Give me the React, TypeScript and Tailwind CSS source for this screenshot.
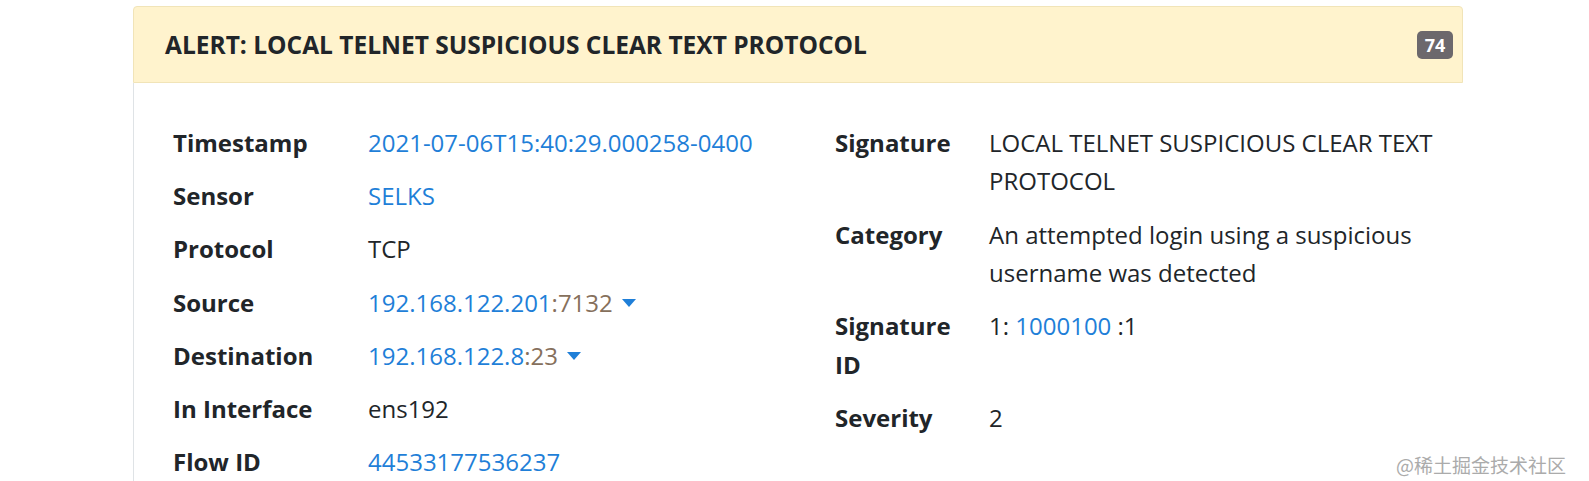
import { Fragment } from 'react';

type Row = { label: string[]; value: React.ReactNode };

const link = 'text-[#1f7fd8]';
const port = 'text-[#86705c]';

function Caret() {
  return (
    <svg className="ml-[9px] inline-block" width="14" height="8" viewBox="0 0 14 8">
      <path d="M0 0 L14 0 L7 8 Z" fill="#1f7fd8" />
    </svg>
  );
}

const left: Row[] = [
  { label: ['Timestamp'], value: <span className={link}>2021-07-06T15:40:29.000258-0400</span> },
  { label: ['Sensor'], value: <span className={link}>SELKS</span> },
  { label: ['Protocol'], value: 'TCP' },
  {
    label: ['Source'],
    value: (
      <span className="inline-flex items-center">
        <span className={link}>192.168.122.201</span>
        <span className={port}>:7132</span>
        <Caret />
      </span>
    ),
  },
  {
    label: ['Destination'],
    value: (
      <span className="inline-flex items-center">
        <span className={link}>192.168.122.8</span>
        <span className={port}>:23</span>
        <Caret />
      </span>
    ),
  },
  { label: ['In Interface'], value: 'ens192' },
  { label: ['Flow ID'], value: <span className={link}>44533177536237</span> },
];

const right: Row[] = [
  {
    label: ['Signature'],
    value: (
      <>
        <span className="block">LOCAL TELNET SUSPICIOUS CLEAR TEXT</span>
        <span className="block">PROTOCOL</span>
      </>
    ),
  },
  {
    label: ['Category'],
    value: (
      <>
        <span className="block">An attempted login using a suspicious</span>
        <span className="block">username was detected</span>
      </>
    ),
  },
  {
    label: ['Signature', 'ID'],
    value: (
      <>
        1: <span className={link}>1000100</span> :1
      </>
    ),
  },
  { label: ['Severity'], value: '2' },
];

function Column({ rows, labelWidth }: { rows: Row[]; labelWidth: string }) {
  return (
    <div className="flex flex-col gap-[14.8px]">
      {rows.map((row) => (
        <div key={row.label.join(' ')} className="flex">
          <div className={`${labelWidth} shrink-0 font-bold`}>
            {row.label.map((l, i) => (
              <Fragment key={l}>
                {i > 0 && <br />}
                {l}
              </Fragment>
            ))}
          </div>
          <div className="whitespace-nowrap">{row.value}</div>
        </div>
      ))}
    </div>
  );
}

export default function App() {
  return (
    <div
      className="h-[481px] w-[1589px] overflow-hidden bg-white text-[#212529]"
      style={{ fontFamily: '"Open Sans", "Noto Sans CJK SC", sans-serif' }}
    >
      <div className="ml-[133px] mt-[6px] w-[1330px]">
        {/* Card header */}
        <div className="flex h-[77px] items-center justify-between rounded-t-[4px] border border-[#f1e4b8] bg-[#fff3cd] pl-[31px] pr-[9px]">
          <h5 className="pt-[2px] text-[24.5px] font-bold">ALERT: LOCAL TELNET SUSPICIOUS CLEAR TEXT PROTOCOL</h5>
          <span className="mt-[1px] flex h-[28px] w-[36px] items-center justify-center rounded-[5px] bg-[#6c686c] text-[18px] font-bold text-white">
            74
          </span>
        </div>

        {/* Card body */}
        <div className="flex h-[400px] border-l border-[#dfe3e6] pl-[39px] pt-[41px] text-[24px] leading-[38.4px]">
          <div className="w-[662px]">
            <Column rows={left} labelWidth="w-[195px]" />
          </div>
          <Column rows={right} labelWidth="w-[154px]" />
        </div>
      </div>

      <div className="absolute left-[1396px] top-[451px] text-[19px] text-[#ababab]" style={{ fontFamily: '"Noto Sans CJK SC", sans-serif' }}>
        @稀土掘金技术社区
      </div>
    </div>
  );
}
